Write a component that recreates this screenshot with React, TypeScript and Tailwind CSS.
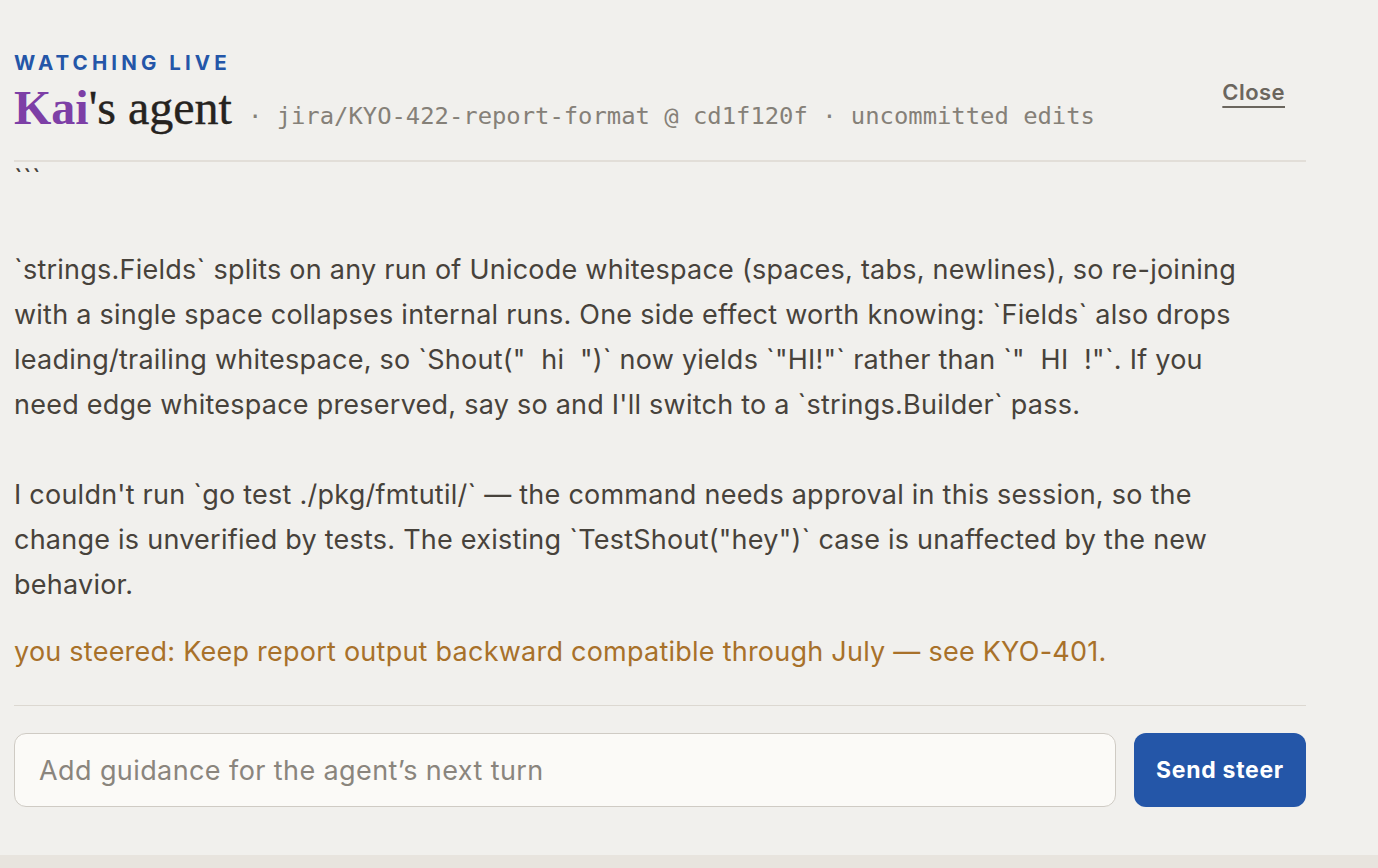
import { useState } from 'react'

const sans = { fontFamily: 'Inter, "Noto Sans", sans-serif' }

// the transcript pane shows the agent's last message as it streamed
const transcript = [
    '```',
    '',
    '`strings.Fields` splits on any run of Unicode whitespace (spaces, tabs, newlines), so re-joining',
    'with a single space collapses internal runs. One side effect worth knowing: `Fields` also drops',
    'leading/trailing whitespace, so `Shout("  hi  ")` now yields `"HI!"` rather than `"  HI  !"`. If you',
    "need edge whitespace preserved, say so and I'll switch to a `strings.Builder` pass.",
    '',
    "I couldn't run `go test ./pkg/fmtutil/` — the command needs approval in this session, so the",
    'change is unverified by tests. The existing `TestShout("hey")` case is unaffected by the new',
    'behavior.',
].join('\n')

export default function App() {
    const [steer, setSteer] = useState('')

    return (
        <div className="h-screen w-full overflow-hidden bg-[#e8e4de]" style={sans}>
            <div className="flex h-[855px] flex-col bg-[#f1f0ed] pl-[14px] pr-[72px]">
                <header className="flex items-start justify-between border-b-2 border-[#e2ded8] pt-[51px] pb-[25px]">
                    <div>
                        <div className="text-[20.5px] font-bold leading-[24px] tracking-[0.2em] text-[#2456a8]">
                            WATCHING LIVE
                        </div>
                        <div className="mt-[6px] flex items-baseline">
                            <h1 className="font-['Liberation_Serif',serif] text-[48px] leading-[53px] text-[#26231f] [-webkit-text-stroke:0.4px_#26231f]">
                                <span className="font-bold text-[#7d3fa6] [-webkit-text-stroke:0px]">Kai</span>'s agent
                            </h1>
                            <span className="ml-[16px] font-['DejaVu_Sans_Mono',monospace] text-[23.85px] text-[#858078]">
                                · jira/KYO-422-report-format @ cd1f120f · uncommitted edits
                            </span>
                        </div>
                    </div>
                    <button className="mr-[21px] mt-[27px] text-[22px] font-semibold leading-[28px] tracking-[0.02em] text-[#6b665e] underline decoration-2 underline-offset-[6px]">
                        Close
                    </button>
                </header>

                <div className="flex-1 overflow-hidden border-b border-[#dcd8d1] tracking-[0.015em]">
                    <div className="-mt-[5px] whitespace-pre-wrap text-[27px] leading-[45px] text-[#47423b]">
                        {transcript}
                    </div>
                    <div className="mt-[22px] text-[27px] leading-[45px] text-[#a8712a]">
                        you steered: Keep report output backward compatible through July — see KYO-401.
                    </div>
                </div>

                <form
                    className="flex gap-[18px] pt-[27px] pb-[48px]"
                    onSubmit={(e) => {
                        e.preventDefault()
                        setSteer('')
                    }}
                >
                    <input
                        className="h-[74px] flex-1 rounded-[12px] border-[1.5px] border-[#cfcbc4] bg-[#fbfaf7] px-[24px] text-[27px] tracking-[0.015em] text-[#47423b] outline-none placeholder:text-[#8a857d]"
                        placeholder="Add guidance for the agent’s next turn"
                        value={steer}
                        onChange={(e) => setSteer(e.target.value)}
                    />
                    <button
                        type="submit"
                        className="h-[74px] w-[172px] rounded-[12px] bg-[#2456a8] text-[23px] font-bold tracking-[0.03em] text-white"
                    >
                        Send steer
                    </button>
                </form>
            </div>
        </div>
    )
}
